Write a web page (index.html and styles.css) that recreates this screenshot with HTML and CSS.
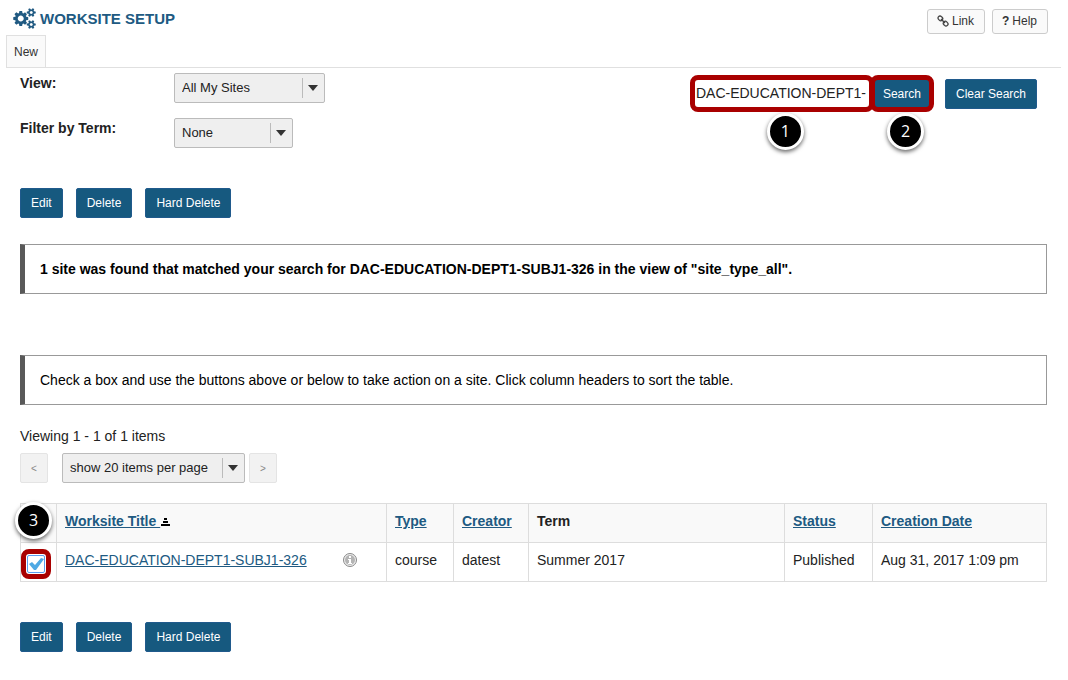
FILE: index.html
```html
<!DOCTYPE html>
<html lang="en">
<head>
    <meta charset="utf-8">
    <title>Worksite Setup</title>
    <link rel="stylesheet" href="styles.css">
</head>
<body>
    <header class="tool-header">
        <h1 class="tool-title">
            <svg class="cogs" viewBox="0 0 1920 1792" aria-hidden="true">
                <path fill="currentColor" d="M896 896q0-106-75-181t-181-75-181 75-75 181 75 181 181 75 181-75 75-181zm768 512q0-52-38-90t-90-38-90 38-38 90q0 53 37.5 90.5t90.5 37.5 90.5-37.5 37.5-90.5zm0-1024q0-52-38-90t-90-38-90 38-38 90q0 53 37.5 90.5t90.5 37.5 90.5-37.5 37.5-90.5zm-384 421v185q0 10-7 19.5t-16 10.5l-155 24q-11 35-32 76 34 48 90 115 7 11 7 20 0 12-7 19-23 30-82.5 89.5t-78.5 59.5q-11 0-21-7l-115-90q-37 19-77 31-11 108-23 155-7 24-30 24h-186q-11 0-20-7.5t-10-17.5l-23-153q-34-10-75-31l-118 89q-7 7-20 7-11 0-21-8-144-133-144-160 0-9 7-19 10-14 41-53t47-61q-23-44-35-82l-152-24q-10-1-17-9.5t-7-19.5v-185q0-10 7-19.5t16-10.5l155-24q11-35 32-76-34-48-90-115-7-11-7-20 0-12 7-20 22-30 82-89t79-59q11 0 21 7l115 90q34-18 77-32 11-108 23-154 7-24 30-24h186q11 0 20 7.5t10 17.5l23 153q34 10 75 31l118-89q8-7 20-7 11 0 21 8 144 133 144 160 0 8-7 19-12 16-42 54t-45 60q23 48 34 82l152 23q10 2 17 10.5t7 19.5zm640 533v140q0 16-149 31-12 27-30 52 51 113 51 138 0 4-4 7-122 71-124 71-8 0-46-47t-52-68q-20 2-30 2t-30-2q-14 21-52 68t-46 47q-2 0-124-71-4-3-4-7 0-25 51-138-18-25-30-52-149-15-149-31v-140q0-16 149-31 13-29 30-52-51-113-51-138 0-4 4-7 4-2 35-20t59-34 30-16q8 0 46 46.5t52 67.5q20-2 30-2t30 2q51-71 92-112l6-2q4 0 124 70 4 3 4 7 0 25-51 138 17 23 30 52 149 15 149 31zm0-1024v140q0 16-149 31-12 27-30 52 51 113 51 138 0 4-4 7-122 71-124 71-8 0-46-47t-52-68q-20 2-30 2t-30-2q-14 21-52 68t-46 47q-2 0-124-71-4-3-4-7 0-25 51-138-18-25-30-52-149-15-149-31v-140q0-16 149-31 13-29 30-52-51-113-51-138 0-4 4-7 4-2 35-20t59-34 30-16q8 0 46 46.5t52 67.5q20-2 30-2t30 2q51-71 92-112l6-2q4 0 124 70 4 3 4 7 0 25-51 138 17 23 30 52 149 15 149 31z"/>
            </svg>
            WORKSITE SETUP
        </h1>
        <div class="tool-links">
            <a class="tool-link" href="#link">
                <svg width="12" height="12" viewBox="0 0 12 12" fill="none" stroke="#444" aria-hidden="true">
                    <rect x="1" y="1" width="5" height="4" rx="2" transform="rotate(45 3 3)" stroke-width="1.3"/>
                    <rect x="6" y="7" width="5" height="4" rx="2" transform="rotate(45 9 9)" stroke-width="1.3"/>
                    <path d="M4 4l4 4" stroke-width="1.5"/>
                </svg>
                Link
            </a>
            <a class="tool-link" href="#help"><b>?</b> Help</a>
        </div>
    </header>

    <nav class="tabs">
        <a class="tab" href="#new">New</a>
    </nav>

    <main class="content">
        <div class="top">
            <form class="filters">
                <label for="view">View:</label>
                <span class="select select-view">
                    <select id="view"><option>All My Sites</option></select>
                </span>
                <label for="term">Filter by Term:</label>
                <span class="select select-term">
                    <select id="term"><option>None</option></select>
                </span>
            </form>
            <form class="search">
                <div class="step-target">
                    <input class="search-input" type="text" aria-label="Search" value="DAC-EDUCATION-DEPT1-">
                    <span class="mark"></span>
                    <span class="step step-below">1</span>
                </div>
                <div class="step-target">
                    <button class="btn" type="button">Search</button>
                    <span class="mark"></span>
                    <span class="step step-below">2</span>
                </div>
                <button class="btn btn-clear" type="button">Clear Search</button>
            </form>
        </div>

        <div class="actions">
            <button class="btn" type="button">Edit</button>
            <button class="btn" type="button">Delete</button>
            <button class="btn" type="button">Hard Delete</button>
        </div>

        <p class="message message-result">1 site was found that matched your search for DAC-EDUCATION-DEPT1-SUBJ1-326 in the view of "site_type_all".</p>

        <p class="message">Check a box and use the buttons above or below to take action on a site. Click column headers to sort the table.</p>

        <p class="viewing">Viewing 1 - 1 of 1 items</p>
        <div class="pager">
            <button class="page-btn" type="button" aria-label="Previous" disabled>&lt;</button>
            <span class="select select-size">
                <select aria-label="Items per page"><option>show 20 items per page</option></select>
            </span>
            <button class="page-btn" type="button" aria-label="Next" disabled>&gt;</button>
        </div>

        <table class="sites">
            <colgroup>
                <col class="col-check">
                <col class="col-title">
                <col class="col-type">
                <col class="col-creator">
                <col>
                <col class="col-status">
                <col class="col-date">
            </colgroup>
            <thead>
                <tr>
                    <th class="check-cell"><span class="step step-head">3</span></th>
                    <th>
                        <a href="#title">Worksite Title </a>
                        <svg class="sort" width="10" height="8" viewBox="0 0 10 8" aria-hidden="true">
                            <path d="M4 0h3v2h-3zM3 3h5v2h-5zM1 6h9v2h-9z"/>
                        </svg>
                    </th>
                    <th><a href="#type">Type</a></th>
                    <th><a href="#creator">Creator</a></th>
                    <th>Term</th>
                    <th><a href="#status">Status</a></th>
                    <th><a href="#date">Creation Date</a></th>
                </tr>
            </thead>
            <tbody>
                <tr>
                    <td class="check-cell">
                        <div class="step-target check-target">
                            <input class="check" type="checkbox" aria-label="DAC-EDUCATION-DEPT1-SUBJ1-326" checked>
                            <svg class="tick" width="18" height="18" viewBox="0 0 18 18" aria-hidden="true">
                                <path d="M2 9l3-2 3 3 6-7 3 1-8 11h-2z" fill="#4fa9e4"/>
                            </svg>
                            <span class="mark"></span>
                        </div>
                    </td>
                    <td>
                        <div class="site">
                            <a href="#site">DAC-EDUCATION-DEPT1-SUBJ1-326</a>
                            <svg width="14" height="14" viewBox="0 0 14 14" aria-hidden="true">
                                <circle cx="7" cy="7" r="6.5" fill="#eee" stroke="#888"/>
                                <circle cx="7" cy="7" r="5" fill="#b4b4b4"/>
                                <path d="M6 3h2v2h-2zM5 6h3v4h1v1h-4v-1h1v-3h-1z" fill="#fff"/>
                            </svg>
                        </div>
                    </td>
                    <td>course</td>
                    <td>datest</td>
                    <td>Summer 2017</td>
                    <td>Published</td>
                    <td>Aug 31, 2017 1:09 pm</td>
                </tr>
            </tbody>
        </table>

        <div class="actions actions-bottom">
            <button class="btn" type="button">Edit</button>
            <button class="btn" type="button">Delete</button>
            <button class="btn" type="button">Hard Delete</button>
        </div>
    </main>
</body>
</html>
```
FILE: styles.css
```css
* {
    box-sizing: border-box;
}
body {
    margin: 0;
    background: #fff;
    color: #222;
    font: 14px/20px "Liberation Sans", Arial, sans-serif;
}
a {
    color: #205a82;
}
button, input, select {
    font-family: inherit;
    margin: 0;
}

/* header */
.tool-header {
    display: flex;
    justify-content: space-between;
    align-items: flex-start;
    height: 35px;
    padding: 8px 20px 0 13px;
}
.tool-title {
    display: flex;
    align-items: center;
    gap: 4px;
    margin: 0;
    color: #205a82;
    font-size: 15px;
    line-height: 20px;
}
.cogs {
    width: 23px;
    height: 21px;
}
.tool-links {
    display: flex;
    gap: 7px;
    padding-top: 1px;
}
.tool-link {
    display: flex;
    align-items: center;
    gap: 3px;
    height: 25px;
    padding: 0 10px 2px 9px;
    border: 1px solid #ccc;
    border-radius: 3px;
    background: #fafafa;
    color: #333;
    font-size: 12px;
    text-decoration: none;
}
.tabs {
    display: flex;
    margin: 0 7px 0 6px;
    border-bottom: 1px solid #e0e0e0;
}
.tab {
    padding: 6px 7px 5px;
    border: 1px solid #e0e0e0;
    border-bottom: none;
    background: #fafafa;
    color: #333;
    font-size: 12px;
    text-decoration: none;
}
.content {
    padding: 5px 21px 20px 20px;
}

/* filters and search */
.top {
    display: flex;
    justify-content: space-between;
    align-items: flex-start;
}
.filters {
    display: grid;
    grid-template-columns: 154px auto;
    row-gap: 15px;
}
.filters label {
    font-weight: bold;
}
.select {
    position: relative;
    display: block;
    height: 30px;
}
.select select {
    appearance: none;
    width: 100%;
    height: 30px;
    padding: 0 30px 2px 7px;
    border: 1px solid #bbb;
    border-radius: 2px;
    background: #efefef;
    color: #222;
    font-size: 13px;
}
.select::before {
    content: "";
    position: absolute;
    top: 5px;
    right: 22px;
    height: 20px;
    border-left: 1px solid #bbb;
    pointer-events: none;
}
.select::after {
    content: "";
    position: absolute;
    top: 12px;
    right: 7px;
    border: 5px solid transparent;
    border-top: 6px solid #333;
    border-bottom: none;
    pointer-events: none;
}
.select-view {
    width: 151px;
}
.select-term {
    width: 119px;
}
.select-size {
    width: 183px;
}
.search {
    display: flex;
    padding: 6px 10px 0 0;
}
.search-input {
    width: 180px;
    height: 30px;
    padding: 0 3px 2px;
    border: 1px solid #bbb;
    color: #222;
    font-size: 14px;
}
.btn {
    height: 30px;
    padding: 0 10px 1px;
    border: 1px solid #205a8c;
    border-radius: 2px;
    background: #16597f;
    color: #fff;
    font-size: 12px;
}
.btn-clear {
    margin-left: 13px;
}

/* numbered steps and the red frames */
.step-target {
    position: relative;
}
.mark {
    position: absolute;
    inset: -4px -2px -3px;
    border: 5px solid #a90000;
    border-radius: 8px;
    pointer-events: none;
}
.step {
    position: absolute;
    width: 37px;
    height: 37px;
    border: 3px solid #fff;
    border-radius: 50%;
    background: #000;
    box-shadow: 0 2px 4px rgba(0, 0, 0, 0.6);
    color: #fff;
    font: 16px/30px "Open Sans", sans-serif;
    text-align: center;
}
.step-below {
    top: 34px;
    left: calc(50% - 15px);
}
.step-head {
    top: -2px;
    left: -6px;
}

.actions {
    display: flex;
    gap: 13px;
    margin-top: 40px;
}

/* messages */
.message {
    margin: 0 0 31px;
    padding: 14px 15px;
    border: 1px solid #999;
    border-left: 5px solid #595959;
    color: #000;
}
.message-result {
    margin: 26px 0 61px;
    font-weight: bold;
}

/* pager */
.viewing {
    margin: -10px 0 7px;
}
.pager {
    display: flex;
    margin-bottom: 20px;
}
.page-btn {
    width: 28px;
    height: 30px;
    padding: 0;
    border: 1px solid #e4e4e4;
    border-radius: 2px;
    background: #f2f2f2;
    color: #888;
    font-size: 10px;
}
.pager .select {
    margin: 0 4px 0 14px;
}

/* site list */
.sites {
    width: 100%;
    border-collapse: collapse;
    table-layout: fixed;
}
.sites th, .sites td {
    height: 39px;
    padding: 0 8px 4px;
    border: 1px solid #ddd;
    text-align: left;
    vertical-align: middle;
}
.sites th {
    background: #f9f9f9;
}
.col-check {
    width: 36px;
}
.col-title {
    width: 330px;
}
.col-type {
    width: 67px;
}
.col-creator {
    width: 75px;
}
.col-status {
    width: 88px;
}
.col-date {
    width: 174px;
}
.sites .check-cell {
    position: relative;
    padding: 3px 0 0;
}
.site {
    display: flex;
    justify-content: space-between;
    align-items: center;
    padding-right: 21px;
}
.check-target {
    width: 30px;
    height: 30px;
    padding: 6px;
}
.check-target .mark {
    inset: 0;
}
.check {
    appearance: none;
    display: block;
    width: 18px;
    height: 18px;
    border: 1px solid #5b9dee;
    border-radius: 2px;
    background: #fff;
}
.tick {
    position: absolute;
    top: 6px;
    left: 6px;
    pointer-events: none;
}
.actions-bottom {
    margin-top: 40px;
}
```
